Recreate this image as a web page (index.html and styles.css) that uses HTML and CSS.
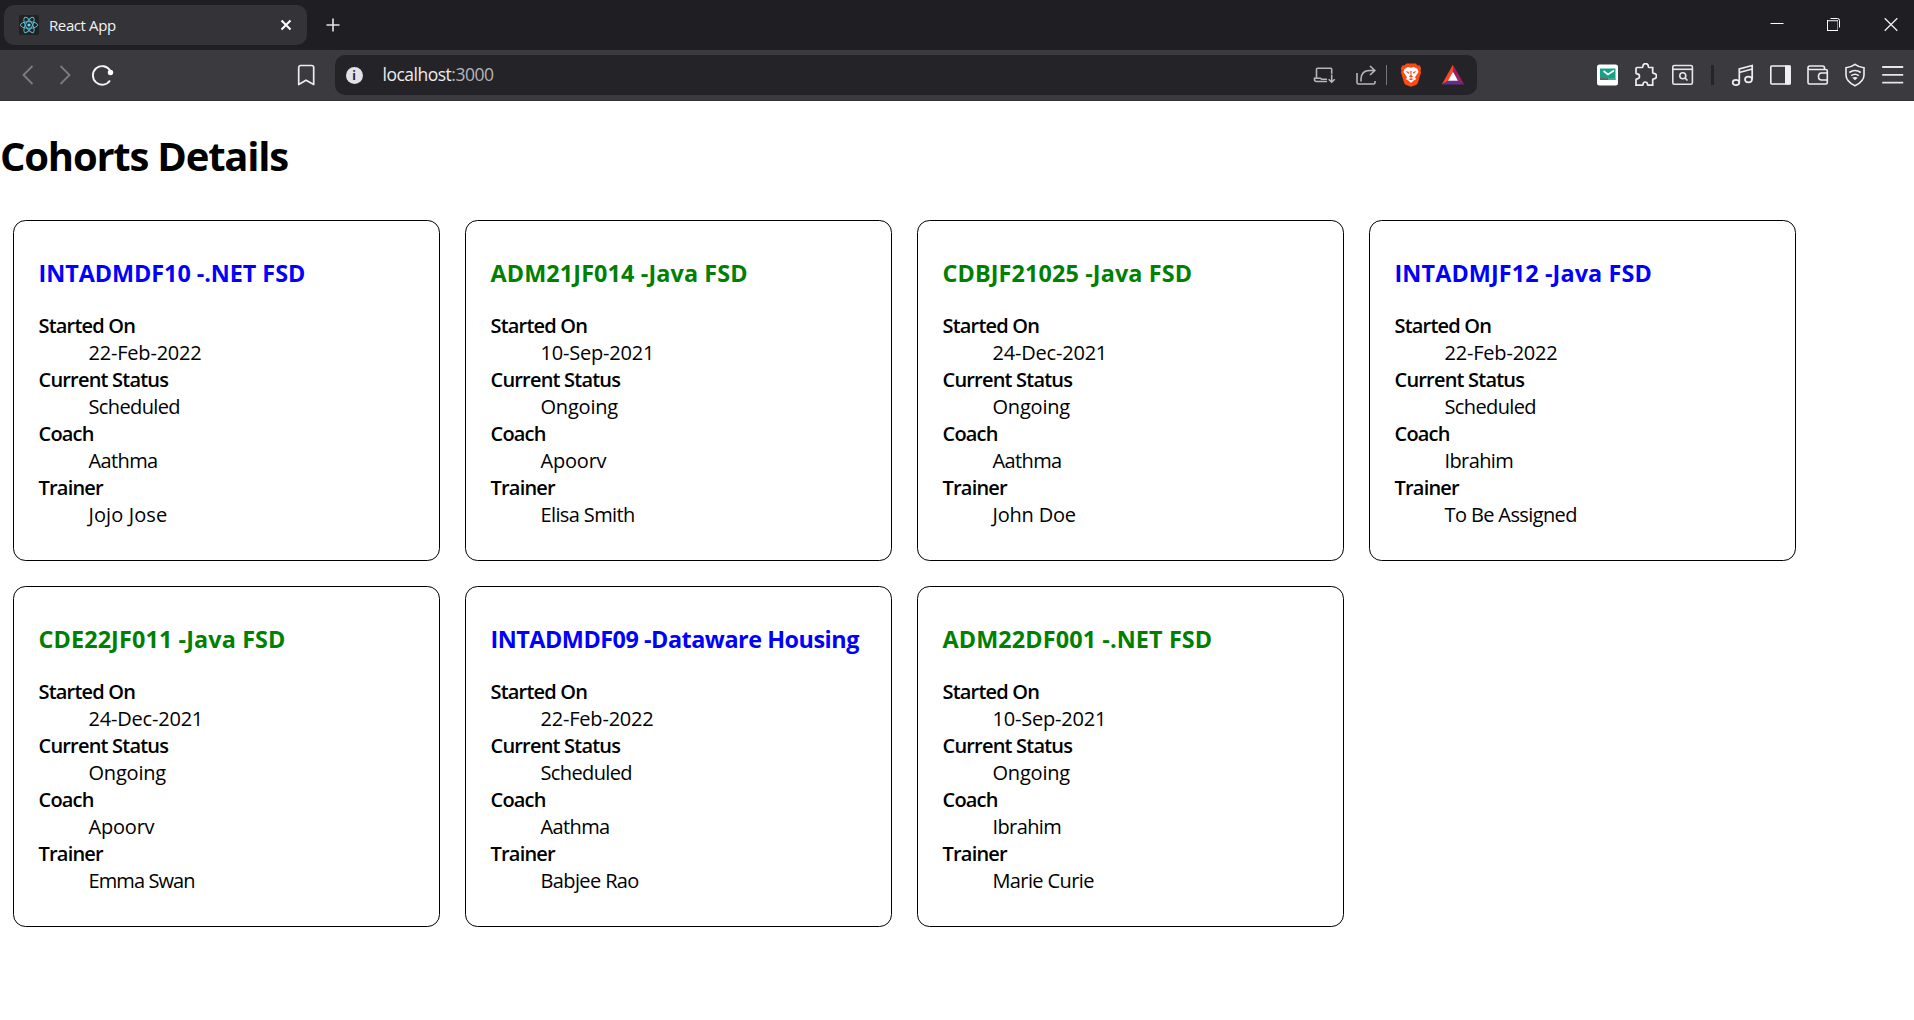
FILE: index.html
```html
<!DOCTYPE html>
<html lang="en">
<head>
<meta charset="utf-8">
<title>React App</title>
<link rel="stylesheet" href="styles.css">
</head>
<body>
<header class="browser">
  <div class="tabstrip">
    <div class="tab">
      <svg class="favicon" viewBox="0 0 20 20"><rect width="20" height="20" rx="2" fill="#222"/><g fill="none" stroke="#58b9d3" stroke-width="1"><ellipse cx="10" cy="10" rx="8.6" ry="3.3"/><ellipse cx="10" cy="10" rx="8.6" ry="3.3" transform="rotate(60 10 10)"/><ellipse cx="10" cy="10" rx="8.6" ry="3.3" transform="rotate(120 10 10)"/></g><circle cx="10" cy="10" r="1.6" fill="#61dafb"/></svg>
      <span class="tab-title">React App</span>
      <svg class="tab-close" viewBox="0 0 12 12"><path d="M1.5 1.5l9 9M10.5 1.5l-9 9" stroke="#fff" stroke-width="2"/></svg>
    </div>
    <svg class="new-tab" viewBox="0 0 14 14"><path d="M7 .5v13M.5 7h13" stroke="#e4e4e8" stroke-width="1.6"/></svg>
    <div class="window-controls">
      <svg viewBox="0 0 14 14"><path d="M.5 5.5h13" stroke="#fff"/></svg>
      <svg viewBox="0 0 14 14"><path d="M3.5 .5h7a2 2 0 0 1 2 2v7" fill="none" stroke="#fff"/><rect x=".5" y="2.500" width="10" height="10" fill="none" stroke="#fff"/><path d="M1 3h9.500v9" fill="none" stroke="#88888c"/></svg>
      <svg viewBox="0 0 14 14"><path d="M.7 .2l12.600 12.600M13.300 .2L.7 12.800" stroke="#eee" stroke-width="1.300"/></svg>
    </div>
  </div>
  <div class="toolbar">
    <div class="nav">
      <svg viewBox="0 0 24 24"><path d="M16.500 3L7.500 12l9 9" fill="none" stroke="#7d7c82" stroke-width="1.800"/></svg>
      <svg viewBox="0 0 24 24"><path d="M7.500 3l9 9-9 9" fill="none" stroke="#7d7c82" stroke-width="1.800"/></svg>
      <svg viewBox="0 0 24 24"><path d="M19 17.500A9.300 9.300 0 1 1 19.100 7.500" fill="none" stroke="#f4f4f6" stroke-width="1.900"/><circle cx="19.500" cy="9.500" r="2.700" fill="#fff"/></svg>
    </div>
    <svg class="icon bookmark" viewBox="0 0 24 24"><path d="M6.300 2.500h11.400a2 2 0 0 1 2 2v17L12 17.200 4.700 21.500v-17a2 2 0 0 1 1.600-2z" fill="none" stroke="#ededf0" stroke-width="1.700" stroke-linejoin="round"/></svg>
    <div class="address">
      <span class="info">i</span>
      <span class="url">localhost<span class="port">:3000</span></span>
      <div class="address-actions">
        <svg class="icon" viewBox="0 0 24 24"><g fill="none" stroke="#b7b6bc" stroke-width="1.600"><path d="M15 18.500H4.500a2 2 0 0 1-2-2v-1.200h6l1 1H15M4.500 15V6.200a1 1 0 0 1 1-1h13.200a1 1 0 0 1 1 1v4.500"/><path d="M19.700 11.500v7.500m-3-2.800l3 3 3-3"/></g></svg>
        <svg class="icon share" viewBox="0 0 24 24"><g fill="none" stroke="#b7b6bc" stroke-width="1.600"><path d="M3 10v9.500q0 1.500 1.500 1.500h15q1.500 0 1.500-1.500V18"/><path d="M7 18.500V16Q7.500 7.500 15.500 7.500h5M16 3l4.800 4.500L16 12"/></g></svg>
        <span class="separator"></span>
        <svg class="icon" viewBox="0 0 24 24"><path d="M7.500 .5h9l2.300 2 1.700-.3 1.700 3-.7 2.500.6 1.500-3.200 10.500q-.4 1.200-1.500 2L12 23.700l-5.400-2q-1.100-.8-1.500-2L1.900 9.200l.6-1.500-.7-2.500 1.700-3 1.700.3z" fill="#fb4a12"/><path d="M9 4l3 .7 3-.7 3.500 2 1 3-3.500 5.200 1 2-2.300 1.300L12 20l-2.700-2.500L7 16.200l1-2L4.500 9l1-3z" fill="#fff"/><path d="M6.500 8l3.500 1-.5 2zM17.500 8L14 9l.5 2zM11.300 8h1.400l-.3 4 1.600 1.500-2 1.200-2-1.200 1.600-1.500zM9.500 16l2.500-.8 2.500.8-2.500 1.200z" fill="#fb4a12"/></svg>
        <svg class="icon bat" viewBox="0 0 24 24"><path d="M12 1.500L.8 21.500 7 18l5-9z" fill="#ff4724"/><path d="M12 1.500l11.200 20L17 18l-5-9z" fill="#9e1f63"/><path d="M.8 21.500h22.400L17 17.500H7z" fill="#662d91"/><path d="M12 8.800l5 9H7z" fill="#fff"/></svg>
      </div>
    </div>
    <div class="extensions">
      <svg class="icon" viewBox="0 0 24 24"><rect x="1" y="1.500" width="21" height="21" rx="2.500" fill="#fff"/><path d="M4 5.500h15.500v9.500H4z" fill="#16a085"/><path d="M7.500 8l4.500 3.500L18 7.500" fill="none" stroke="#fff" stroke-width="1.600"/><path d="M4 16h15.500" stroke="#333" stroke-width="1.500"/><path d="M12 16h7.500" stroke="#2fc6a3" stroke-width="1.500"/></svg>
      <svg class="icon" viewBox="0 0 24 24"><path d="M4 4.500h5.200c.6 0 .7-.6.700-1.200a2.700 2.700 0 0 1 5.400 0c0 .6.100 1.200.7 1.200h3.700v5c0 .6.500.8 1 .8a2.800 2.800 0 0 1 0 5.600c-.5 0-1 .2-1 .8v5.500h-4.500c-.5 0-.7-.4-.7-1a2.200 2.200 0 0 0-4.400 0c0 .6-.2 1-.7 1H3v-5.500c0-.6.500-.8 1-.8a2.500 2.500 0 0 0 0-5c-.5 0-1-.2-1-.8V5.500a1 1 0 0 1 1-1z" fill="none" stroke="#eeeef2" stroke-width="1.700"/></svg>
      <svg class="icon" viewBox="0 0 24 24"><g fill="none" stroke="#e6e6ea" stroke-width="1.600"><rect x="1.800" y="2.500" width="19.600" height="18.800" rx="1.500"/><path d="M2 6.300h19.400"/><circle cx="11.800" cy="12.800" r="3"/><path d="M14 15l2.500 2.500"/></g></svg>
      <span class="group-divider"></span>
      <svg class="icon" viewBox="0 0 24 24"><g fill="none" stroke="#eeeef2" stroke-width="1.700"><ellipse cx="5" cy="19.500" rx="3.300" ry="2.600"/><ellipse cx="17.500" cy="16.500" rx="3.500" ry="2.800"/><path d="M8.300 19.500V6l12.900-3.500v14M8.300 9.500l12.900-3.500"/></g></svg>
      <svg class="icon" viewBox="0 0 24 24"><rect x="2.800" y="3" width="19.200" height="18" rx="1" fill="none" stroke="#f1f1f4" stroke-width="1.600"/><path d="M17 2.500h5.800v19H17z" fill="#f1f1f4"/></svg>
      <svg class="icon" viewBox="0 0 24 24"><g fill="none" stroke="#eeeef2" stroke-width="1.600"><path d="M2 4.500v15q0 1.500 1.500 1.500h16.300q1.500 0 1.500-1.500V8q0-1.500-1.500-1.500H3.500Q2 6.300 2 4.700 2 3 4 3h12.500q2 0 2 2v1.500M22 10h-6.500q-3 0-3 3.500t3 3.500H22"/></g></svg>
      <svg class="icon" viewBox="0 0 24 24"><g fill="none" stroke="#eeeef2" stroke-width="1.600"><path d="M12 1.300Q16 4.300 21 4.700V12q0 6.500-9 10.700Q3 18.500 3 12V4.700Q8 4.300 12 1.300z"/><path d="M6.300 9.500q5.700-4 11.400 0M8.200 12.700q3.800-2.800 7.600 0"/></g><path d="M9.300 14.800q2.700-1.700 5.400 0L12 17.300z" fill="#eeeef2"/></svg>
      <svg class="icon" viewBox="0 0 24 24"><path d="M1.200 4h21M1.200 11.800h21M1.200 19.700h21" stroke="#e6e6ea" stroke-width="1.800"/></svg>
    </div>
  </div>
</header>
<main>
  <h1>Cohorts Details</h1>
  <div class="cohorts">
    <section class="cohort"><h3 class="scheduled">INTADMDF10 -.NET FSD</h3><dl><dt>Started On</dt><dd class="numeric">22-Feb-2022</dd><dt>Current Status</dt><dd>Scheduled</dd><dt>Coach</dt><dd>Aathma</dd><dt>Trainer</dt><dd class="roomy">Jojo Jose</dd></dl></section>
    <section class="cohort"><h3 class="ongoing java">ADM21JF014 -Java FSD</h3><dl><dt>Started On</dt><dd class="numeric">10-Sep-2021</dd><dt>Current Status</dt><dd class="numeric">Ongoing</dd><dt>Coach</dt><dd class="numeric">Apoorv</dd><dt>Trainer</dt><dd>Elisa Smith</dd></dl></section>
    <section class="cohort"><h3 class="ongoing java">CDBJF21025 -Java FSD</h3><dl><dt>Started On</dt><dd class="numeric">24-Dec-2021</dd><dt>Current Status</dt><dd class="numeric">Ongoing</dd><dt>Coach</dt><dd>Aathma</dd><dt>Trainer</dt><dd class="numeric">John Doe</dd></dl></section>
    <section class="cohort"><h3 class="scheduled java">INTADMJF12 -Java FSD</h3><dl><dt>Started On</dt><dd class="numeric">22-Feb-2022</dd><dt>Current Status</dt><dd>Scheduled</dd><dt>Coach</dt><dd>Ibrahim</dd><dt>Trainer</dt><dd>To Be Assigned</dd></dl></section>
    <section class="cohort"><h3 class="ongoing java">CDE22JF011 -Java FSD</h3><dl><dt>Started On</dt><dd class="numeric">24-Dec-2021</dd><dt>Current Status</dt><dd class="numeric">Ongoing</dd><dt>Coach</dt><dd class="numeric">Apoorv</dd><dt>Trainer</dt><dd class="snug">Emma Swan</dd></dl></section>
    <section class="cohort"><h3 class="scheduled dataware">INTADMDF09 -Dataware Housing</h3><dl><dt>Started On</dt><dd class="numeric">22-Feb-2022</dd><dt>Current Status</dt><dd>Scheduled</dd><dt>Coach</dt><dd>Aathma</dd><dt>Trainer</dt><dd>Babjee Rao</dd></dl></section>
    <section class="cohort"><h3 class="ongoing java">ADM22DF001 -.NET FSD</h3><dl><dt>Started On</dt><dd class="numeric">10-Sep-2021</dd><dt>Current Status</dt><dd class="numeric">Ongoing</dd><dt>Coach</dt><dd>Ibrahim</dd><dt>Trainer</dt><dd>Marie Curie</dd></dl></section>
  </div>
</main>
</body>
</html>
```
FILE: styles.css
```css
* { box-sizing: border-box; }
body { margin: 0; background: #fff; color: #000; font: 20px/27px "Segoe UI", "Open Sans", "Noto Sans", sans-serif; }
svg { display: block; flex: none; }

.tabstrip { display: flex; align-items: center; height: 50px; padding-left: 4px; background: #1f1e23; }
.tab { display: flex; align-items: center; width: 303px; height: 40px; padding: 0 15px; border-radius: 10px; background: #343337; }
.favicon { width: 20px; height: 20px; }
.tab-title { margin-left: 10px; padding-bottom: 1px; color: #f3f3f5; font-size: 15px; letter-spacing: -0.4px; line-height: 20px; }
.tab-close { width: 12px; height: 12px; margin-left: auto; }
.new-tab { width: 14px; height: 14px; margin-left: 19px; }
.window-controls { display: flex; gap: 43px; margin-left: auto; padding-right: 16px; }
.window-controls svg { width: 14px; height: 14px; }

.toolbar { display: flex; align-items: center; height: 51px; background: #3b3a3f; border-bottom: 1px solid #323135; }
.icon, .nav svg { width: 24px; height: 24px; }
.nav { display: flex; gap: 13.5px; padding-left: 15.5px; }
.bookmark { margin-left: 179px; }
.address { display: flex; align-items: center; width: 1142px; height: 40px; margin-left: 17px; padding: 0 12px 0 11px; border-radius: 10px; background: #242328; }
.info { width: 17px; height: 17px; border-radius: 50%; background: #e2e0e8; color: #242328; font-size: 12px; font-weight: 700; line-height: 17px; text-align: center; }
.url { margin-left: 20px; padding-bottom: 1px; color: #ececef; font-size: 17.5px; letter-spacing: -0.5px; }
.port { color: #b5b4ba; }
.address-actions { display: flex; align-items: center; margin-left: auto; }
.share { margin-left: 18px; }
.separator { width: 1px; height: 20px; margin: 0 12px 0 8px; background: #77767c; }
.bat { margin-left: 18px; }
.extensions { display: flex; align-items: center; gap: 13.5px; margin-left: auto; padding-right: 9.5px; }
.group-divider { width: 3px; height: 20px; margin: 0 3px; background: #252428; }

h1 { margin: 0; padding: 28px 0 25.6px; font-size: 40px; line-height: 53px; letter-spacing: -1.22px; }
.cohorts { display: grid; grid-template-columns: repeat(4, 427px); gap: 25px; padding: 12.5px; }
.cohort { height: 341px; padding: 13.7px 25px 0; border: 1px solid #000; border-radius: 12.5px; }
h3 { margin: 23.4px 0 22.4px; font-size: 23.4px; line-height: 31px; letter-spacing: -0.05px; white-space: nowrap; }
.java { letter-spacing: 0.11px; }
.dataware { letter-spacing: -0.48px; }
dl { margin: 0; }
dt { font-weight: 600; letter-spacing: -0.8px; }
dd { margin: 0 0 0 50px; letter-spacing: -0.62px; }
.numeric { letter-spacing: -0.2px; }
.roomy { letter-spacing: 0.1px; }
.snug { letter-spacing: -0.9px; }
.scheduled { color: #00f; }
.ongoing { color: green; }
```
